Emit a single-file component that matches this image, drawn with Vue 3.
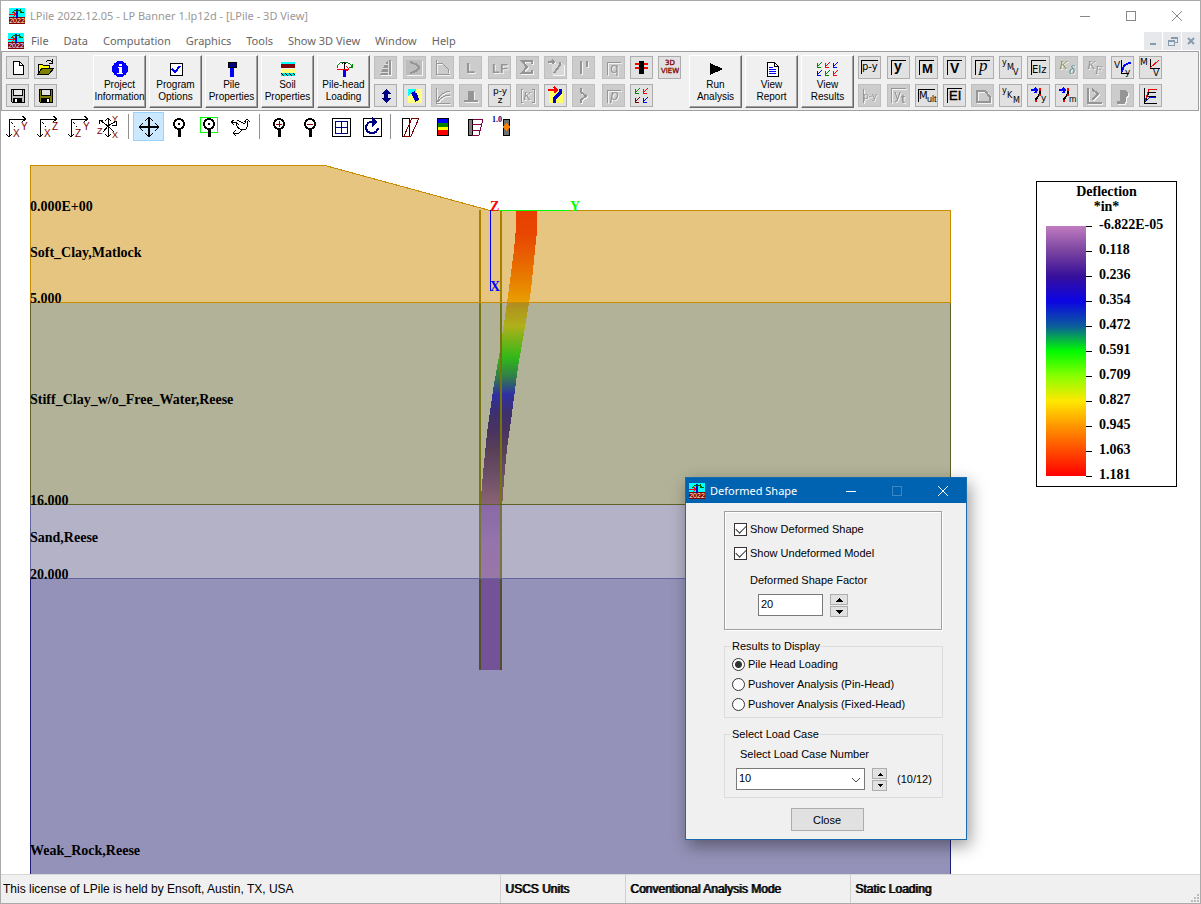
<script setup>
import { ref } from 'vue'

const menus = ['File', 'Data', 'Computation', 'Graphics', 'Tools', 'Show 3D View', 'Window', 'Help']

const F = 'font-family="Liberation Sans, Arial, sans-serif"'
const S = 'font-family="Liberation Serif, serif"'
const M = 'font-family="DejaVu Sans, sans-serif"'
const frame = '<path d="M4 19V4H19" stroke="currentColor" fill="none"/>'
const maroon = '#800000'

const files = [
  { n: 'New', s: '<path d="M7 5H13L17 9V18H7Z" fill="#fff" stroke="#000"/><path d="M13 5V9H17" fill="none" stroke="#000"/>' },
  { n: 'Open', s: '<path d="M4 18V8H8L9 9H15V12" fill="#ff0" stroke="#000"/><path d="M4 18L8 12H20L15 18Z" fill="#808000" stroke="#000"/><path d="M12 6Q15 3 18 6M18 3V7H15" fill="none" stroke="#000"/>' },
  { n: 'Save', s: '<path d="M5 5H18V18H6L5 17Z" fill="#c0c0c0" stroke="#000"/><path d="M7 5H16V11H7Z" fill="#e8e8e8" stroke="#000"/><path d="M7 14H16V18H7Z" fill="#000"/><path d="M9 15H11V18H9Z" fill="#fff"/>' },
  { n: 'Save as', s: '<path d="M5 5H18V18H6L5 17Z" fill="#808000" stroke="#000"/><path d="M7 5H16V11H7Z" fill="#e1e1e1" stroke="#000"/><path d="M7 14H16V18H7Z"/><path d="M13 15H15V18H13Z" fill="#fff"/>' },
]

const setup = [
  { n: ['Project', 'Information'], s: '<circle cx="12" cy="8" r="8" fill="#00f"/><path d="M11 3H14V5H11ZM10 6H14V12H15V13H9V12H11V7H10Z" fill="#fff"/>' },
  { n: ['Program', 'Options'], s: '<path d="M6 2H18V14H6Z" fill="#fff" stroke="#000"/><path d="M8 8L11 11L16 5" fill="none" stroke="#00f" stroke-width="2"/>' },
  { n: ['Pile', 'Properties'], s: '<path d="M8 1H16V6H8Z" fill="#000080" stroke="#000"/><path d="M10 7H14V16H10Z" fill="#00f"/>' },
  { n: ['Soil', 'Properties'], s: '<path d="M5 1H19V3H5Z" fill="#0ff"/><path d="M5 3H19V7H5Z" fill="#800000"/><path d="M5 8H19V12H5Z" fill="#ffff80"/><path d="M5 12H19V15H5Z" fill="#0dd"/><path d="M5 12L8 15M9 12L12 15M13 12L16 15M17 12L19 14" stroke="#000"/>' },
  { n: ['Pile-head', 'Loading'], s: '<path d="M5 0H20V7H5Z" fill="#fff"/><path d="M11 9H14V16H11Z" fill="#00f"/><path d="M5 7Q6 1 12 1Q18 1 20 6M17 6H20V3" fill="none" stroke="#080"/><path d="M12 1V8M10 3L12 1L14 3" stroke="#000" fill="none"/><path d="M5 8H17M14 5L17 8L14 10" fill="none" stroke="#f00"/>' },
]

const arrows = (x, y, c) => `<path d="M${x + 6} ${y}L${x + 1} ${y + 5}M${x + 1} ${y + 1}V${y + 5}H${x + 5}" stroke="${c}" fill="none"/>`

const run = [
  { n: ['Run', 'Analysis'], s: '<path d="M6 2L19 8L6 14Z"/>' },
  { n: ['View', 'Report'], s: '<path d="M7 1H14L18 5V15H7Z" fill="#fff" stroke="#000"/><path d="M14 1V5H18" fill="none" stroke="#000"/><path d="M9 6H13M9 8H16M9 10H16M9 12H16" stroke="#00f"/>' },
  { n: ['View', 'Results'], s: arrows(0, 1, '#080') + arrows(8, 1, '#f00') + arrows(16, 1, '#00f') + arrows(0, 9, '#00f') + arrows(8, 9, '#080') + arrows(16, 9, '#f00') },
]

const deflect = '<path d="M4 6H10M8 4L10 6L8 9" stroke="#00f" stroke-width="2" fill="none"/><path d="M13 6V10L9 15V18" stroke="#000" stroke-width="2" fill="none"/><path d="M12 4H14V7H12ZM12 10H14V12H12ZM8 16H10V18H8Z" fill="#f00"/>'

const tools = [
  { n: 'Load distribution', d: 1, s: '<path d="M13 5L17 4V19H6L8 14Z" fill="currentColor"/><path d="M6 16H14M8 12H14M10 8H14M14 5V19" stroke="#ddd"/>' },
  { n: 'Curve', d: 1, s: '<path d="M3 4H19V19H3Z" fill="#bdbdbd"/><path d="M7 6Q17 9 16 12Q15 15 7 17" stroke="currentColor" stroke-width="2" fill="none"/>' },
  { n: 'Envelope', d: 1, s: '<path d="M5 4V18H19M6 7H11L17 13V17" stroke="currentColor" fill="none"/>' },
  { n: 'L', d: 1, s: `<text x="7" y="17" ${F} font-size="15" font-weight="bold" fill="currentColor">L</text>` },
  { n: 'LF', d: 1, s: `<text x="4" y="17" ${F} font-size="13" font-weight="bold" fill="currentColor">LF</text>` },
  { n: 'Sum', d: 1, s: '<path d="M16 8V5H6L11 11L6 17H16V14" stroke="currentColor" stroke-width="2" fill="none"/>' },
  { n: 'Lateral shift', d: 1, s: '<path d="M8 8H20V19H8Z" fill="#d8d8d8"/><path d="M4 6H10M8 4L10 6L8 8M16 6V9L10 17" stroke="currentColor" stroke-width="2" fill="none"/>' },
  { n: 'Pile pair', d: 1, s: '<path d="M9 5V18M15 5V11" stroke="currentColor" stroke-width="2" fill="none"/>' },
  { n: 'q', d: 1, s: `<path d="M5 19V6H19" stroke="currentColor" fill="none"/><text x="8" y="17" ${M} font-size="14" fill="currentColor">q</text>` },
  { n: 'Section', s: '<path d="M5 7H18V9H5ZM5 11H18V13H5Z" fill="#f00"/><path d="M9 5H14V18H9Z"/>' },
  { n: '3D view', s: `<text x="12" y="9" text-anchor="middle" ${M} font-size="7" fill="${maroon}" stroke="${maroon}" stroke-width=".3">3D</text><text x="12" y="17" text-anchor="middle" ${M} font-size="7" fill="${maroon}" stroke="${maroon}" stroke-width=".3">VIEW</text>` },
  { n: 'Vertical', s: '<path d="M12 5L17 10H14V14H17L12 19L7 14H10V10H7Z" fill="#000080"/>' },
  { n: 'Batter', s: '<path d="M5 5H19V19H5Z" fill="#ffff80"/><path d="M5 5H13V9H9L5 12Z" fill="#0ff"/><path d="M10 8L14 17" stroke="#00c" stroke-width="4"/><path d="M13 9L16 16" stroke="#000080"/>' },
  { n: 'Curves', d: 1, s: '<path d="M5 4V19H19M6 18Q9 8 19 7M7 18Q10 12 19 11" stroke="currentColor" fill="none"/>' },
  { n: 'Base', d: 1, s: '<path d="M9 7H15V16H9ZM5 16H19V18H5Z" fill="currentColor"/>' },
  { n: 'p-y z', s: `<text x="12" y="10" text-anchor="middle" ${M} font-size="9">p-y</text><text x="12" y="19" text-anchor="middle" ${M} font-size="9">z</text>` },
  { n: 'Stiffness matrix', d: 1, s: '<path d="M7 5H5V18H7M16 5H18V18H16" stroke="currentColor" fill="none"/>' + `<text x="7" y="16" ${S} font-size="12" font-style="italic" fill="currentColor">K</text>` },
  { n: 'Deformed shape', s: '<path d="M5 7H19V19H5Z" fill="#ffff60"/><path d="M4 6H13M10 3L13 6L10 9" stroke="#f00" stroke-width="2" fill="none"/><path d="M16 5V9L10 15V19" stroke="#00c" stroke-width="3" fill="none"/>' },
  { n: 'Buckling', d: 1, s: '<path d="M9 4V8L14 12L9 16V19" stroke="currentColor" stroke-width="2" fill="none"/>' },
  { n: 'Rho', d: 1, s: `<path d="M5 19V6H19" stroke="currentColor" fill="none"/><text x="8" y="16" ${M} font-size="14" font-style="italic" fill="currentColor">p</text>` },
  { n: 'All plots', s: arrows(4, 4, '#080') + arrows(12, 4, '#f00') + arrows(4, 13, '#800000') + arrows(12, 13, '#00f') },
]

const framed = (t, size) => frame + `<text x="7" y="17" ${F} font-size="${size}" font-weight="bold" fill="currentColor">${t}</text>`
const stair = (b, c) => `<text x="3" y="9" ${M} font-size="8">y</text><text x="8" y="14" ${M} font-size="8">${b}</text><text x="14" y="19" ${M} font-size="8">${c}</text>`

const plots = [
  { n: 'p-y curves', s: '<path d="M3 18V4H20" stroke="#000" fill="none"/>' + `<text x="4" y="14" ${M} font-size="10">p-y</text>` },
  { n: 'Deflection', s: frame + `<text x="7" y="15" ${F} font-size="14" font-weight="bold">y</text>` },
  { n: 'Moment', s: framed('M', 13) },
  { n: 'Shear', s: framed('V', 14) },
  { n: 'Soil reaction', s: frame + `<text x="8" y="15" ${S} font-size="17" font-style="italic">p</text>` },
  { n: 'y, M and V', s: stair('M', 'V') },
  { n: 'EIz', s: frame + `<text x="5" y="17" ${M} font-size="10">EIz</text>` },
  { n: 'K delta', d: 1, s: `<text x="4" y="13" ${S} font-size="13" font-style="italic" fill="#8c9c5c">K</text><text x="14" y="18" ${S} font-size="13" font-style="italic" fill="#5c9090">δ</text>` },
  { n: 'K F', d: 1, s: `<text x="4" y="13" ${S} font-size="13" font-style="italic" fill="currentColor">K</text><text x="12" y="18" ${S} font-size="12" font-style="italic" fill="currentColor">F</text>` },
  { n: 'V against y', s: `<text x="3" y="12" ${M} font-size="9">V</text><path d="M10 4V17H18" stroke="#000" fill="none"/><path d="M11 16Q12 7 20 7" stroke="#00f" stroke-width="2" fill="none"/><text x="14" y="19" ${M} font-size="9">y</text>` },
  { n: 'M against V', s: `<text x="1" y="9" ${M} font-size="9">M</text><path d="M11 3V12H21" stroke="#000" fill="none"/><path d="M11 12L20 4" stroke="#f00" fill="none"/><text x="14" y="20" ${M} font-size="9">V</text>` },
  { n: 'p-y user curves', d: 1, s: '<path d="M5 19V5" stroke="currentColor"/>' + `<text x="5" y="15" ${M} font-size="9" fill="currentColor">p-y</text>` },
  { n: 'y t', d: 1, s: frame + `<text x="7" y="15" ${M} font-size="12" fill="currentColor">y</text><text x="14" y="19" ${F} font-size="12" font-weight="bold" fill="currentColor">t</text>` },
  { n: 'Ultimate moment', s: '<path d="M3 18V5H20" stroke="#000" fill="none"/>' + `<text x="4" y="15" ${M} font-size="10">M</text><text x="12" y="18" ${F} font-size="9">ult</text>` },
  { n: 'EI', s: frame + `<text x="6" y="16" ${F} font-size="13" stroke="#000" stroke-width=".4">EI</text>` },
  { n: 'Interaction', d: 1, s: '<path d="M6 7H14L19 13V18H6Z" stroke="currentColor" fill="none" stroke-width="2"/>' },
  { n: 'y, K and M', s: stair('K', 'M') },
  { n: 'Deflected y', s: deflect + `<text x="14" y="17" ${M} font-size="9">y</text>` },
  { n: 'Deflected m', s: deflect + `<text x="14" y="18" ${F} font-size="9">m</text>` },
  { n: 'Pushover', d: 1, s: '<path d="M5 4V19H19M9 5L15 10L9 16" stroke="currentColor" stroke-width="2" fill="none"/>' },
  { n: 'Axial', d: 1, s: '<path d="M9 6H14V17H9ZM14 7Q20 10 14 14M6 17H13V19H6Z" fill="currentColor" stroke="currentColor"/>' },
  { n: 'Load curves', s: '<path d="M5 4V19H18M5 18L8 12H17M6 18L10 8H17" stroke="#000" fill="none"/><path d="M6 17L10 5H18" stroke="#f00" fill="none"/><path d="M6 18L11 13H17" stroke="#00f" fill="none"/>' },
]

const axes = (a, b) => `<path d="M7 25V7H24M20 4L24 7L20 10M4 22L7 25L10 22" stroke="#000" fill="none"/><path d="M7 7L13 15" stroke="#000" stroke-dasharray="2 2"/><text x="11" y="25" ${F} font-size="10" fill="${maroon}">${a}</text><text x="19" y="18" ${F} font-size="10" fill="${maroon}">${b}</text>`
const pin = (x) => `<circle cx="${x}" cy="12" r="5" fill="#fff" stroke="#000" stroke-width="2"/><path d="M${x - 1} 18H${x + 2}V25H${x - 1}Z"/>`

const view = [
  [
    { n: 'X-Y view', s: axes('X', 'Y') },
    { n: 'X-Z view', s: axes('X', 'Z') },
    { n: 'Z-Y view', s: axes('Z', 'Y') },
    { n: '3D axes', s: `<path d="M13 6V25M10 9L13 6L16 9M13 14L5 8M4 12V8H8M13 14L21 9M17 13H21V9M13 14L8 20M13 14L19 20M10 22L13 25L16 22" stroke="#000" fill="none"/><text x="2" y="22" ${F} font-size="9" fill="${maroon}">Z</text><text x="17" y="10" ${F} font-size="9" fill="${maroon}">Y</text><text x="17" y="26" ${F} font-size="9" fill="${maroon}">X</text>` },
  ],
  [
    { n: 'Pan', on: 1, s: '<path d="M16 6V25M6 15H26" stroke="#000" stroke-width="2"/><path d="M12 9L16 5L20 9M12 21L16 25L20 21M10 11L6 15L10 19M22 11L26 15L22 19" stroke="#000" fill="none"/>' },
    { n: 'Zoom', s: pin(15) + '<circle cx="15" cy="12" r="1"/>' },
    { n: 'Zoom window', s: '<path d="M5 5H22V20H5Z" fill="none" stroke="#0f0"/>' + pin(14) + '<circle cx="14" cy="12" r="1"/>' },
    { n: 'Rotate', s: '<path d="M5 10H10L13 13M10 11Q11 18 19 18Q22 17 21 9M11 8L17 11Q20 12 20 8M18 10L21 7L24 10M8 8L5 10L8 13M10 18L7 21L10 24M7 21H13L16 18" stroke="#000" fill="none"/>' },
  ],
  [
    { n: 'Zoom in', s: pin(15) + '<path d="M12 12H18M15 9V15" stroke="#800000"/>' },
    { n: 'Zoom out', s: pin(15) + '<path d="M12 12H18" stroke="#800000"/>' },
    { n: 'Fit', s: '<path d="M6 6H24V24H6Z" fill="#fff" stroke="#000"/><path d="M9 9H21V21H9ZM15 9V21M9 15H21" fill="none" stroke="#000080"/>' },
    { n: 'Refresh', s: '<path d="M6 6H24V24H6Z" fill="#fff" stroke="#000"/><path d="M18 10H13Q9 12 9 16Q10 21 15 21Q20 21 21 16M16 7L19 10L16 13Z" fill="none" stroke="#000080" stroke-width="2"/>' },
  ],
  [
    { n: 'Deformed shape', s: '<path d="M6 6H13V24H6Z" fill="#fff" stroke="#000"/><path d="M8 24L16 6H23L15 24Z" fill="none" stroke="#800000"/>' },
    { n: 'Contours', s: '<path d="M10 6H22V24H10Z"/><path d="M11 7H21V11H11Z" fill="#00f"/><path d="M11 11H21V15H11Z" fill="#008000"/><path d="M11 15H21V18H11Z" fill="#ff0"/><path d="M11 18H21V23H11Z" fill="#f00"/>' },
    { n: 'Diagram', s: '<path d="M10 7H14V23H10Z" fill="#808080" stroke="#000"/><path d="M15 7H25L21 23H14M14 12H24M14 18H22" fill="none" stroke="#800040"/>' },
    { n: 'Scale', s: `<text x="3" y="10" ${S} font-size="8" font-weight="bold" fill="#000080">1.0</text><path d="M14 7H20V23H14Z" fill="#707070" stroke="#000"/><path d="M17 11L21 15L17 19L13 15Z" fill="#ff8000"/>` },
  ],
]

const layers = [
  { depth: '0.000E+00', y: 211 },
  { depth: 'Soft_Clay,Matlock', y: 257 },
  { depth: '5.000', y: 303 },
  { depth: 'Stiff_Clay_w/o_Free_Water,Reese', y: 404 },
  { depth: '16.000', y: 505 },
  { depth: 'Sand,Reese', y: 542 },
  { depth: '20.000', y: 579 },
  { depth: 'Weak_Rock,Reese', y: 855 },
]
const scale = ['-6.822E-05', '0.118', '0.236', '0.354', '0.472', '0.591', '0.709', '0.827', '0.945', '1.063', '1.181']

const pileStops = [
  [0, '#e84000'], [5, '#e84600'], [10, '#e86000'], [15, '#e87e00'], [20, '#e8a000'], [20, '#b08c20'],
  [25, '#b0b01a'], [32, '#30b818'], [36, '#308048'], [40, '#3030a4'], [44, '#3c306c'], [48, '#4a3460'], [52, '#584058'],
  [58, '#6e5068'], [64, '#8a6474'], [64, '#8868a8'], [72, '#9474aa'], [80, '#9a76a8'], [80, '#745298'], [100, '#745298'],
]

const logo = '<path d="M0 0H16V10H0Z" fill="#0ff"/><path d="M0 9H16V16H0Z" fill="#800000"/><path d="M7 1H9V10H7Z" fill="#00c"/><path d="M3 5Q7 0 13 4M11 1V4H15" stroke="#060" fill="none"/><path d="M0 6H6M4 4L7 6L4 9" stroke="#f00" fill="none"/><text x="8" y="15" text-anchor="middle" font-family="Liberation Sans, sans-serif" font-size="7" fill="#fff">2022</text>'

const shape = ref(true)
const undeformed = ref(true)
const factor = ref('20')
const result = ref('Pile Head Loading')
const results = ['Pile Head Loading', 'Pushover Analysis (Pin-Head)', 'Pushover Analysis (Fixed-Head)']
const loadCase = ref(10)
</script>

<template>
  <div class="window">
    <header class="titlebar">
      <svg class="logo" viewBox="0 0 16 16" v-html="logo"></svg>
      <h1>LPile 2022.12.05 - LP Banner 1.lp12d - [LPile - 3D View]</h1>
      <div class="controls">
        <button aria-label="Minimize"><svg viewBox="0 0 12 12"><path d="M1 6H11" /></svg></button>
        <button aria-label="Maximize"><svg viewBox="0 0 12 12"><path d="M1 1H10V10H1Z" /></svg></button>
        <button aria-label="Close"><svg class="smooth" viewBox="0 0 12 12"><path d="M1 1L11 11M11 1L1 11" /></svg></button>
      </div>
    </header>

    <nav class="menubar">
      <svg class="logo" viewBox="0 0 16 16" v-html="logo"></svg>
      <button v-for="m in menus" :key="m" class="menu">{{ m }}</button>
      <div class="mdi">
        <button aria-label="Minimize view"><svg viewBox="0 0 18 18"><path d="M6 12H12" stroke-width="2" /></svg></button>
        <button aria-label="Restore view"><svg viewBox="0 0 18 18"><path d="M5 8H11V13H5ZM8 7V5H14V10H12M5 9H11M8 6H14" /></svg></button>
        <button aria-label="Close view"><svg class="smooth" viewBox="0 0 18 18"><path d="M6 6L12 12M12 6L6 12" stroke-width="2" /></svg></button>
      </div>
    </nav>

    <div class="toolbar">
      <div class="grid files">
        <button v-for="t in files" :key="t.n" class="tool" :aria-label="t.n"><svg viewBox="1 1 21 21" v-html="t.s"></svg></button>
      </div>
      <div class="bigs">
        <button v-for="t in setup" :key="t.n[1] + t.n[0]" class="big"><svg viewBox="0 0 24 18" v-html="t.s"></svg><span>{{ t.n[0] }}</span><span>{{ t.n[1] }}</span></button>
      </div>
      <div class="grid tools">
        <button v-for="t in tools" :key="t.n" class="tool" :disabled="!!t.d" :aria-label="t.n"><svg viewBox="1 1 21 21" v-html="t.s"></svg></button>
      </div>
      <div class="bigs">
        <button v-for="t in run" :key="t.n[1]" class="big"><svg viewBox="0 0 24 18" v-html="t.s"></svg><span>{{ t.n[0] }}</span><span>{{ t.n[1] }}</span></button>
      </div>
      <div class="grid plots">
        <button v-for="t in plots" :key="t.n" class="tool" :disabled="!!t.d" :aria-label="t.n"><svg viewBox="1 1 21 21" v-html="t.s"></svg></button>
      </div>
    </div>

    <div class="viewbar">
      <div v-for="(g, i) in view" :key="i" class="viewgroup">
        <button v-for="t in g" :key="t.n" :class="{ on: t.on }" :aria-label="t.n"><svg viewBox="0 0 31 29" v-html="t.s"></svg></button>
      </div>
    </div>

    <main class="stage">
      <svg class="model" viewBox="1 142 1199 732" role="img" aria-label="Soil layers and deformed pile">
        <defs>
          <linearGradient id="pile" gradientUnits="userSpaceOnUse" x1="0" y1="211" x2="0" y2="670">
            <stop v-for="(s, i) in pileStops" :key="i" :offset="s[0] + '%'" :stop-color="s[1]" />
          </linearGradient>
        </defs>
        <g>
          <path d="M30 165H325L490 210H951V303H30Z" fill="#e6c581" />
          <path d="M30 303H951V504H30Z" fill="#b2b298" />
          <path d="M30 504H951V578H30Z" fill="#b4b2c6" />
          <path d="M30 578H951V874H30Z" fill="#9492b8" />
          <path d="M516 211H537V232L535 250L531 290L529 303L524 333L518 367L512 413L507 449L504 480L502 508V670H480V510L483 473L487 433L493 390L500 350L507 303L511 273L514 250L516 228Z" fill="url(#pile)" />
          <path d="M479 210H481V303H479ZM500 210H502V303H500Z" fill="#a88000" />
          <path d="M479 303H481V504H479ZM500 303H502V504H500Z" fill="#747410" />
          <path d="M479 504H481V578H479ZM500 504H502V578H500Z" fill="#75753c" />
          <path d="M479 578H481V670H479ZM500 578H502V670H500Z" fill="#50502c" />
          <path d="M30.5 303V165.5H325L490 210.5H950.5V303M30 302.5H951" fill="none" stroke="#c88c00" />
          <path d="M30.5 303V504M950.5 303V504M30 504.5H951" fill="none" stroke="#606028" />
          <path d="M30.5 505V578M950.5 505V578M30 578.5H951" fill="none" stroke="#6464a0" />
          <path d="M30.5 579V874M950.5 579V874" fill="none" stroke="#20207a" />
          <path d="M490 210H570V211H490Z" fill="#0f0" />
          <path d="M490 210H491V291H490Z" fill="#00f" />
        </g>
        <g class="label">
          <text v-for="l in layers" :key="l.depth" x="30" :y="l.y">{{ l.depth }}</text>
          <g class="axis">
            <text x="490" y="211" fill="#f00">Z</text>
            <text x="570" y="211" fill="#0f0">Y</text>
            <text x="490" y="291" fill="#00f">X</text>
          </g>
        </g>
      </svg>

      <aside class="scale">
        <h2>Deflection<br>*in*</h2>
        <div class="ramp">
          <div class="bar"></div>
          <ul><li v-for="s in scale" :key="s">{{ s }}</li></ul>
        </div>
      </aside>

      <section class="dialog" role="dialog" aria-labelledby="dlg">
        <header>
          <svg class="logo" viewBox="0 0 16 16" v-html="logo"></svg>
          <h2 id="dlg">Deformed Shape</h2>
          <div class="controls">
            <button aria-label="Minimize dialog"><svg viewBox="0 0 12 12"><path d="M1 6H11" /></svg></button>
            <button aria-label="Maximize dialog" disabled><svg viewBox="0 0 12 12"><path d="M1 1H10V10H1Z" /></svg></button>
            <button aria-label="Close dialog"><svg class="smooth" viewBox="0 0 12 12"><path d="M1 1L11 11M11 1L1 11" /></svg></button>
          </div>
        </header>
        <form @submit.prevent>
          <div class="panel">
            <label class="check"><input v-model="shape" type="checkbox">Show Deformed Shape</label>
            <label class="check"><input v-model="undeformed" type="checkbox">Show Undeformed Model</label>
            <label class="caption" for="factor">Deformed Shape Factor</label>
            <div class="row">
              <input id="factor" v-model="factor" class="field" type="text">
              <div class="spin">
                <button type="button" aria-label="Increase factor"><svg viewBox="0 0 8 4"><path d="M0 4L4 0L8 4Z" /></svg></button>
                <button type="button" aria-label="Decrease factor"><svg viewBox="0 0 8 4"><path d="M0 0L4 4L8 0Z" /></svg></button>
              </div>
            </div>
          </div>
          <fieldset class="results">
            <legend>Results to Display</legend>
            <label v-for="r in results" :key="r"><input v-model="result" type="radio" name="result" :value="r">{{ r }}</label>
          </fieldset>
          <fieldset class="cases">
            <legend>Select Load Case</legend>
            <label for="case">Select Load Case Number</label>
            <div class="row">
              <div class="combo">
                <select id="case" v-model="loadCase"><option v-for="c in 12" :key="c" :value="c">{{ c }}</option></select>
                <svg viewBox="0 0 9 6"><path d="M0 1L4 5L8 1" /></svg>
              </div>
              <div class="spin small">
                <button type="button" aria-label="Next load case"><svg viewBox="0 0 8 4"><path d="M1 4L4 1L7 4Z" /></svg></button>
                <button type="button" aria-label="Previous load case"><svg viewBox="0 0 8 4"><path d="M1 0L4 3L7 0Z" /></svg></button>
              </div>
              <span>({{ loadCase }}/12)</span>
            </div>
          </fieldset>
          <button class="close">Close</button>
        </form>
      </section>
    </main>

    <footer class="status">
      <span>This license of LPile is held by Ensoft, Austin, TX, USA</span>
      <span class="strong">USCS Units</span>
      <span class="strong">Conventional Analysis Mode</span>
      <span class="strong">Static Loading</span>
      <svg viewBox="0 0 9 9"><path d="M7 0H9V2H7ZM7 3H9V5H7ZM4 3H6V5H4ZM7 6H9V8H7ZM4 6H6V8H4ZM1 6H3V8H1Z" /></svg>
    </footer>
  </div>
</template>

<style>
body { margin: 0; background: #fff; }
</style>

<style scoped>
* { box-sizing: border-box; }
button { margin: 0; padding: 0; border: 0; background: none; color: inherit; font: inherit; }
h1, h2, ul { margin: 0; padding: 0; font: inherit; list-style: none; }
svg { shape-rendering: crispEdges; }
svg.smooth, .combo svg { shape-rendering: auto; }
.window {
  min-height: 100vh;
  display: flex;
  flex-direction: column;
  border: 1px solid #aaa;
  background: #fff;
  color: #000;
  font: 11px/14px "Liberation Sans", Arial, sans-serif;
}
.logo { width: 16px; height: 16px; flex: none; }
.titlebar {
  height: 30px;
  display: flex;
  align-items: center;
  gap: 5px;
  padding-left: 8px;
  color: #999;
  font: 11px/16px "Noto Sans", "Open Sans", sans-serif;
}
.controls { display: flex; margin-left: auto; align-self: stretch; }
.controls button { width: 46px; display: grid; place-items: center; }
.controls svg { width: 12px; height: 12px; fill: none; stroke: #888; }
.menubar {
  height: 20px;
  display: flex;
  align-items: center;
  padding-left: 7px;
  color: #666;
  font: 11px/16px "Noto Sans", "Open Sans", sans-serif;
}
.menu { padding: 0 8px 0 7px; }
.mdi { display: flex; gap: 1px; margin-left: auto; }
.mdi button { width: 18px; height: 18px; background: #e6e8eb; }
.mdi svg { display: block; width: 18px; height: 18px; fill: none; stroke: #869cae; }

.toolbar {
  height: 60px;
  display: flex;
  align-items: flex-start;
  margin-right: 1px;
  padding: 3px 0 0 4px;
  background: #f0f0f0;
  border: 1px solid #a0a0a0;
}
.grid { display: grid; grid-auto-rows: 23px; row-gap: 5px; padding-top: 1px; }
.files { grid-template-columns: 28px 59px; }
.tools { grid-template-columns: 29px 28px 28px 29px 28px 28px 28px 30px 28px 28px 31px; }
.plots { grid-template-columns: 29px repeat(9, 28px) 23px; }
.tool { width: 23px; height: 23px; background: #e1e1e1; border: 1px solid #adadad; }
.tool svg { display: block; width: 21px; height: 21px; }
.tool:disabled { background: #ccc; border-color: #bfbfbf; color: #959595; }
.tool:disabled svg { filter: drop-shadow(1px 1px 0 #f4f4f4); }
.bigs { display: flex; gap: 3px; padding-right: 4px; }
.big {
  width: 53px;
  height: 53px;
  display: flex;
  flex-direction: column;
  align-items: center;
  padding-top: 5px;
  border: 1px solid;
  border-color: #fff #696969 #696969 #fff;
  box-shadow: inset -1px -1px 0 #a0a0a0;
  font-size: 10px;
  line-height: 12px;
}
.big svg { width: 24px; height: 18px; flex: none; }

.viewbar { height: 31px; display: flex; padding: 1px 0 1px 1px; }
.viewgroup { display: flex; }
.viewgroup + .viewgroup { position: relative; padding-left: 7px; }
.viewgroup + .viewgroup::before { content: ""; position: absolute; left: 2px; top: 2px; bottom: 2px; width: 1px; background: #909090; }
.viewgroup + .viewgroup:last-child { padding-left: 8px; }
.viewgroup button { width: 31px; height: 29px; border: 1px solid transparent; }
.viewgroup button.on { background: #cce8ff; border-color: #99d1ff; }
.viewgroup svg { display: block; width: 31px; height: 29px; margin: -1px; }

.stage { position: relative; flex: 1; }
.model { display: block; width: 100%; height: auto; }
.label { font: bold 14px "Liberation Serif", "Times New Roman", serif; }
.scale {
  position: absolute;
  top: 39px;
  right: 23px;
  width: 141px;
  border: 1px solid #000;
  padding: 2px 9px 10px;
  font: bold 14px/15px "Liberation Serif", "Times New Roman", serif;
}
.scale h2 { text-align: center; }
.ramp { display: flex; margin-top: 12px; }
.bar {
  width: 40px;
  height: 250px;
  background: linear-gradient(#c07cc0, #7a44a0 10%, #38109a 20%, #0c04e4 30%, #0c5c9c 40%, #00fa00 50%, #88ff00 60%, #ffe800 70%, #ff9600 80%, #ff4a00 90%, #f00);
}
.ramp ul { margin: -14px 0 -13px; }
.ramp li { position: relative; padding-left: 13px; line-height: 25px; }
.ramp li::before { content: ""; position: absolute; left: 0; top: 14px; width: 6px; height: 1px; background: #000; }

.dialog {
  position: absolute;
  left: 684px;
  top: 335px;
  width: 282px;
  background: #f0f0f0;
  border: 1px solid #1a6ab0;
  box-shadow: 3px 6px 16px rgba(0, 0, 0, 0.4);
}
.dialog header {
  height: 25px;
  display: flex;
  align-items: center;
  gap: 5px;
  padding-left: 3px;
  background: #0063b1;
  color: #fff;
  font: 11px/16px "Noto Sans", "Open Sans", sans-serif;
}
.dialog .controls svg { stroke: #fff; }
.dialog .controls button:disabled svg { stroke: #3b86c3; }
form { display: flex; flex-direction: column; padding: 8px 23px 8px 38px; }
.panel { height: 119px; margin-right: 1px; padding: 10px 9px; border: 1px solid #a0a0a0; box-shadow: inset 1px 1px 0 #fff, 1px 1px 0 #fff; }
label { display: flex; align-items: center; }
.check { height: 14px; margin-bottom: 10px; }
.check + .check { margin-bottom: 0; }
.check + .caption { margin: 13px 0 5px 16px; }
.row { display: flex; align-items: center; }
input, select { margin: 0; font: inherit; color: inherit; background: #fff; border: 1px solid #7a7a7a; border-radius: 0; appearance: none; }
.check input { width: 13px; height: 13px; margin-right: 3px; border-color: #333; display: grid; place-items: center; }
.check input:checked::after { content: ""; width: 9px; height: 5px; margin-top: -3px; border: solid #333; border-width: 0 0 1px 1px; transform: rotate(-45deg); }
.field { width: 65px; height: 22px; margin-left: 24px; padding: 0 2px 2px; }
.spin { display: flex; flex-direction: column; gap: 1px; margin: 2px 0 0 7px; }
.spin button { width: 18px; height: 11px; display: grid; place-items: center; background: #e1e1e1; border: 1px solid #adadad; }
.spin.small button { width: 15px; }
.spin svg { width: 8px; height: 4px; }
fieldset { margin: 0; padding: 0 7px; border: 1px solid #dcdcdc; }
legend { margin: 0 0 0 -1px; padding: 0 1px; }
.results { height: 79px; margin-top: 9px; }
.results label { height: 20px; }
.results legend + label { margin-top: 1px; }
.results input { width: 13px; height: 13px; margin-right: 3px; border-color: #333; border-radius: 50%; }
.results input:checked { background: radial-gradient(circle, #333 3px, #fff 4px); }
.cases { height: 71px; margin-top: 9px; padding-left: 11px; }
.cases legend { margin-left: -5px; }
.cases > label { margin: 6px 0 5px 4px; }
.combo { position: relative; }
.combo select { display: block; width: 129px; height: 22px; padding: 0 2px 2px; }
.combo svg { position: absolute; right: 4px; top: 9px; width: 9px; height: 6px; fill: none; stroke: #444; }
.row span { margin-left: 10px; }
.close { align-self: center; width: 73px; height: 23px; margin: 10px 13px 0 0; background: #e1e1e1; border: 1px solid #adadad; }

.status {
  position: relative;
  height: 29px;
  display: grid;
  grid-template-columns: 499px 125px 225px 1fr;
  background: #f0f0f0;
  border-top: 1px solid #d7d7d7;
  font-size: 12px;
  line-height: 29px;
}
.status span { height: 28px; padding-left: 2px; white-space: nowrap; }
.status .strong { padding-left: 4px; border-left: 1px solid #d0d0d0; text-shadow: 1px 0 0 #000; }
.status svg { position: absolute; right: 1px; bottom: 0; width: 9px; height: 9px; fill: #bbb; }
</style>
